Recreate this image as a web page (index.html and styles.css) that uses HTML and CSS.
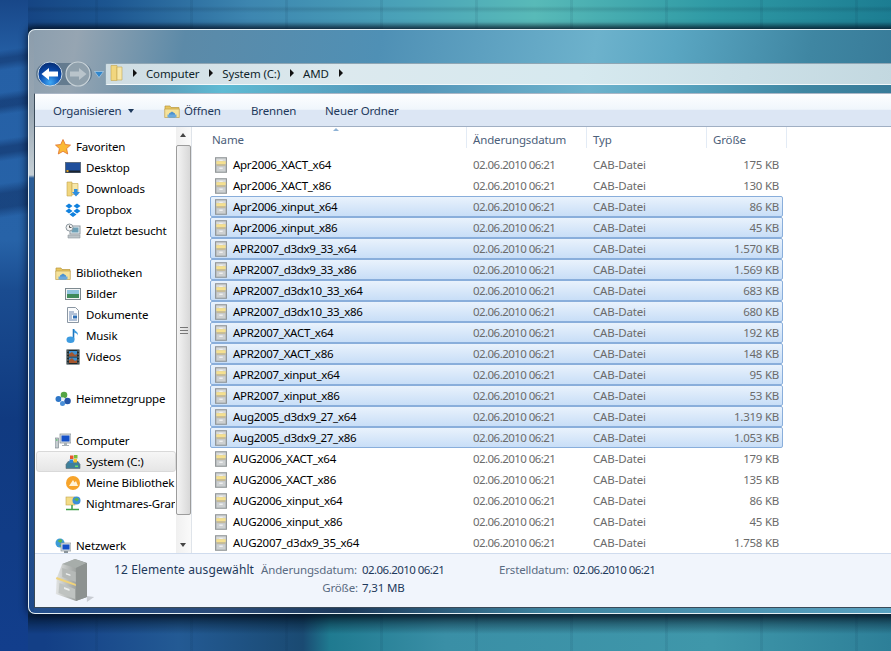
FILE: index.html
```html
<!DOCTYPE html>
<html lang="de">
<head>
<meta charset="utf-8">
<title>AMD</title>
<link rel="stylesheet" href="styles.css">
</head>
<body>
<svg class="defs" width="0" height="0" aria-hidden="true">
  <symbol id="cab" viewBox="0 0 14 18">
    <rect x="0.5" y="0.5" width="13" height="17" fill="#b4b8ba" stroke="#8a8f91"/>
    <rect x="1.5" y="1.5" width="11" height="3" fill="#d8dada"/>
    <path d="M1.5 4.5h11v3.500h-11z" fill="#f5e090"/>
    <rect x="2" y="8.500" width="10" height="1" fill="#dcc070"/>
    <rect x="5" y="3" width="4" height="1" fill="#f6f6f6"/>
    <rect x="2" y="10.500" width="10" height="6" fill="#cdd0d1"/>
    <rect x="5" y="12" width="4" height="1.500" fill="#f4f4f4"/>
  </symbol>
  <symbol id="folder" viewBox="0 0 16 16">
    <path d="M1 3h5l1 1.500h8v2H1z" fill="#e8c65f" stroke="#b8963c" stroke-width=".7"/>
    <path d="M.7 6h14.600v8.500H.7z" fill="#f5e29a" stroke="#c0a050" stroke-width=".7"/>
    <path d="M5 14.500v-4l3-2 3 2v4z" fill="#4d92d0"/>
    <path d="M3.500 11.500h9v3h-9z" fill="#6aa9de"/>
  </symbol>
</svg>
<div class="window">
  <div class="chrome">
    <div class="nav-buttons">
      <span class="pill">
      <svg class="round" width="28" height="28" viewBox="0 0 28 28">
        <defs><radialGradient id="bk" cx=".5" cy=".85" r=".8"><stop offset="0" stop-color="#3fa9f5"/><stop offset=".55" stop-color="#0b4fb4"/><stop offset="1" stop-color="#062f78"/></radialGradient></defs>
        <circle cx="14" cy="14" r="12" fill="url(#bk)" stroke="#c6d6e4" stroke-width="1"/>
        <path d="M5.500 14 13 8v3.500h9v5h-9V20z" fill="#fff"/>
      </svg>
      <svg class="round" width="28" height="28" viewBox="0 0 28 28">
        <circle cx="14" cy="14" r="12" fill="#8fa0ac" stroke="#c8d2d8" stroke-width="1.200"/>
        <path d="M22.500 14 15 8v3.500H6v5h9V20z" fill="#b9c4cb"/>
      </svg>
      </span>
      <svg class="drop" width="10" height="7" viewBox="0 0 10 7"><path d="M.5.500h9L5 6.500z" fill="#2f86cc" stroke="#cfe4f4" stroke-width=".5"/></svg>
    </div>
    <div class="address">
      <svg class="addr-folder" width="14" height="18" viewBox="0 0 14 18"><path d="M1 1.500h6v15H1z" fill="#f1d67e" stroke="#c4a54e" stroke-width=".6"/><path d="M7 3h5v13H7z" fill="#f7e7a8" stroke="#c4a54e" stroke-width=".6"/></svg>
      <span class="crumb-arrow"></span><span class="crumb">Computer</span>
      <span class="crumb-arrow"></span><span class="crumb">System (C:)</span>
      <span class="crumb-arrow"></span><span class="crumb">AMD</span>
      <span class="crumb-arrow"></span>
    </div>
  </div>
  <div class="frame">
    <div class="toolbar">
      <span class="tool tool-org">Organisieren<span class="tool-caret"></span></span>
      <span class="tool tool-open"><svg width="16" height="16"><use href="#folder"/></svg>Öffnen</span>
      <span class="tool tool-burn">Brennen</span>
      <span class="tool">Neuer Ordner</span>
    </div>
    <div class="main">
      <nav class="nav">
        <div class="nav-item group"><svg width="16" height="16" viewBox="0 0 16 16"><path d="M8 .5l2.300 5 5.200.6-3.900 3.500 1.100 5.400L8 12.300 3.300 15l1.100-5.400L.5 6.100l5.200-.6z" fill="#fbb935" stroke="#e0702c" stroke-width=".8"/></svg>Favoriten</div>
        <div class="nav-item sub"><svg width="16" height="16" viewBox="0 0 16 16"><rect x=".5" y="2.500" width="15" height="10" fill="#1f4f9c" stroke="#5b6b80"/><rect x="1" y="10.500" width="14" height="2" fill="#1b2430"/><rect x="1.500" y="10" width="2" height="2" fill="#e0a020"/></svg>Desktop</div>
        <div class="nav-item sub"><svg width="16" height="16" viewBox="0 0 16 16"><path d="M2 1h5v14H2z" fill="#f1d67e" stroke="#c4a54e" stroke-width=".6"/><path d="M7 2.500h6v11H7z" fill="#f7e7a8" stroke="#c4a54e" stroke-width=".6"/><path d="M9 8h3.500v3H15l-4 4.500L7 11h2z" fill="#2f8fe0"/></svg>Downloads</div>
        <div class="nav-item sub"><svg width="16" height="16" viewBox="0 0 16 16"><path d="M4 1.500L.5 4 4 6.500 7.500 4zM12 1.500L8.500 4 12 6.500 15.500 4zM4 6.500L.5 9 4 11.500 7.500 9zM12 6.500L8.500 9 12 11.500 15.500 9zM8 10l-3.500 2.500L8 15l3.500-2.500z" fill="#1081de"/></svg>Dropbox</div>
        <div class="nav-item sub"><svg width="16" height="16" viewBox="0 0 16 16"><rect x="5" y="3" width="10" height="8" fill="#e8eef2" stroke="#8d989f"/><rect x="6.500" y="4.500" width="7" height="5" fill="#6d9fb5"/><circle cx="4.500" cy="4.500" r="3.500" fill="#f2f2f2" stroke="#8d989f"/><path d="M4.500 2.500v2h2" fill="none" stroke="#555"/><path d="M3 12h12v3H3z" fill="#bcc4c8" stroke="#8d989f" stroke-width=".6"/></svg>Zuletzt besucht</div>
        <div class="nav-gap"></div>
        <div class="nav-item group"><svg width="16" height="16"><use href="#folder"/></svg>Bibliotheken</div>
        <div class="nav-item sub"><svg width="16" height="16" viewBox="0 0 16 16"><rect x=".5" y="2.500" width="15" height="11" fill="#f3f4f4" stroke="#7d8a90"/><rect x="2" y="4" width="12" height="4" fill="#8fc3dd"/><rect x="2" y="8" width="12" height="4" fill="#3f8a5a"/></svg>Bilder</div>
        <div class="nav-item sub"><svg width="16" height="16" viewBox="0 0 16 16"><path d="M2.500.5h8l3 3v12h-11z" fill="#fbfcfd" stroke="#8b97a3"/><path d="M4 5h5M4 7h8M4 9h3M4 11h3M4 13h8" stroke="#6a86b0"/><rect x="8" y="8.500" width="4" height="3" fill="#2f6fb5"/></svg>Dokumente</div>
        <div class="nav-item sub"><svg width="16" height="16" viewBox="0 0 16 16"><path d="M8.500 1v10.500" stroke="#1f77c0" stroke-width="1.600"/><ellipse cx="5.500" cy="11.800" rx="4" ry="3.200" fill="#3d9be0"/><path d="M9 1c1 2.500 4.500 2.500 4 6.500C12.500 5.500 10.500 5 9 4.500z" fill="#3d9be0"/></svg>Musik</div>
        <div class="nav-item sub"><svg width="16" height="16" viewBox="0 0 16 16"><rect x="1.500" y=".5" width="13" height="15" fill="#1c2a2e"/><rect x="4" y="2" width="8" height="5.500" fill="#3d8fd0"/><rect x="4" y="8.500" width="8" height="5.500" fill="#3d8fd0"/><path d="M4 5l3-2 3 3 2-1v2.500H4zM4 11l3-2 3 3 2-1v3H4z" fill="#a5562e"/><path d="M2.500 2h.8M2.500 5h.8M2.500 8h.8M2.500 11h.8M2.500 14h.8M12.700 2h.8M12.700 5h.8M12.700 8h.8M12.700 11h.8M12.700 14h.8" stroke="#dfe8ea"/></svg>Videos</div>
        <div class="nav-gap"></div>
        <div class="nav-item group"><svg width="16" height="16" viewBox="0 0 16 16"><circle cx="3.500" cy="8" r="3" fill="#2f77c8"/><circle cx="9" cy="4" r="3.300" fill="#55a544"/><circle cx="12.500" cy="10" r="3.300" fill="#2456a8"/><circle cx="7.500" cy="12.500" r="2.500" fill="#4a8fd8"/><circle cx="8" cy="8" r="1.800" fill="#e8f0f8"/></svg>Heimnetzgruppe</div>
        <div class="nav-gap"></div>
        <div class="nav-item group"><svg width="16" height="16" viewBox="0 0 16 16"><rect x="5" y="1" width="11" height="9" fill="#d9dee2" stroke="#7f8a92" stroke-width=".7"/><rect x="6.500" y="2.500" width="8" height="6" fill="#1450c8"/><path d="M9 10h3v2h2v1H7v-1h2z" fill="#a7b0b6"/><rect x="0" y="5" width="3.500" height="10" fill="#c5ccd0" stroke="#6f7a82" stroke-width=".6"/><rect x="1" y="6.500" width="1.500" height="1" fill="#30c040"/></svg>Computer</div>
        <div class="nav-item sub selected"><svg width="16" height="16" viewBox="0 0 16 16"><path d="M1 10.500l2-3h10l2 3v4H1z" fill="#3f7f99" stroke="#5d6b72" stroke-width=".6"/><rect x="10" y="11.500" width="3" height="1.500" fill="#6be06b"/><rect x="5" y="1.500" width="3.500" height="3.500" fill="#e8562a"/><rect x="9" y="1" width="3.500" height="3.500" fill="#7cbb3a"/><rect x="4.500" y="5.500" width="3.500" height="3.500" fill="#2f86d8"/><rect x="8.500" y="5" width="3.500" height="3.500" fill="#f4c22c"/></svg>System (C:)</div>
        <div class="nav-item sub"><svg width="16" height="16" viewBox="0 0 16 16"><circle cx="8" cy="8" r="7" fill="#f7a42b"/><path d="M4 11l4-6 1.500 2.500L11 6l2 5z" fill="#fff3d8"/></svg>Meine Bibliothek</div>
        <div class="nav-item sub"><svg width="16" height="16" viewBox="0 0 16 16"><rect x="1" y="1" width="9" height="8" fill="#f3dc86" stroke="#c4a54e" stroke-width=".6"/><circle cx="11.500" cy="4.500" r="4" fill="#3d8fd8"/><path d="M9 3.500l3-2 2 2-2 2z" fill="#5fb548"/><path d="M7 9v4M1 13.500h13" stroke="#3fa048" stroke-width="1.500"/></svg>Nightmares-Gran</div>
        <div class="nav-gap"></div>
        <div class="nav-item group"><svg width="16" height="16" viewBox="0 0 16 16"><circle cx="5" cy="5" r="4.500" fill="#3d9bd8"/><path d="M2.500 3l3-2 2 2-2 2zM4 7l3 0-1 2z" fill="#5fb548"/><rect x="6" y="5" width="10" height="8" fill="#d9dee2" stroke="#7f8a92" stroke-width=".6"/><rect x="7.500" y="6.500" width="7" height="5" fill="#1450c8"/><rect x="9" y="13" width="4" height="2" fill="#8a949a"/></svg>Netzwerk</div>
      </nav>
      <div class="scrollbar">
        <span class="scroll-up"></span>
        <div class="thumb"><span class="grip"></span></div>
        <span class="scroll-down"></span>
      </div>
      <section class="list">
        <div class="header">
          <span class="sort-arrow"></span>
          <span class="col col-name">Name</span>
          <span class="col">Änderungsdatum</span>
          <span class="col">Typ</span>
          <span class="col">Größe</span>
        </div>
        <div class="rows">
          <div class="row"><svg width="12" height="16"><use href="#cab"/></svg><span class="name">Apr2006_XACT_x64</span><span class="date">02.06.2010 06:21</span><span>CAB-Datei</span><span class="size">175 KB</span></div>
          <div class="row"><svg width="12" height="16"><use href="#cab"/></svg><span class="name">Apr2006_XACT_x86</span><span class="date">02.06.2010 06:21</span><span>CAB-Datei</span><span class="size">130 KB</span></div>
          <div class="row on"><svg width="12" height="16"><use href="#cab"/></svg><span class="name">Apr2006_xinput_x64</span><span class="date">02.06.2010 06:21</span><span>CAB-Datei</span><span class="size">86 KB</span></div>
          <div class="row on"><svg width="12" height="16"><use href="#cab"/></svg><span class="name">Apr2006_xinput_x86</span><span class="date">02.06.2010 06:21</span><span>CAB-Datei</span><span class="size">45 KB</span></div>
          <div class="row on"><svg width="12" height="16"><use href="#cab"/></svg><span class="name">APR2007_d3dx9_33_x64</span><span class="date">02.06.2010 06:21</span><span>CAB-Datei</span><span class="size">1.570 KB</span></div>
          <div class="row on"><svg width="12" height="16"><use href="#cab"/></svg><span class="name">APR2007_d3dx9_33_x86</span><span class="date">02.06.2010 06:21</span><span>CAB-Datei</span><span class="size">1.569 KB</span></div>
          <div class="row on"><svg width="12" height="16"><use href="#cab"/></svg><span class="name">APR2007_d3dx10_33_x64</span><span class="date">02.06.2010 06:21</span><span>CAB-Datei</span><span class="size">683 KB</span></div>
          <div class="row on"><svg width="12" height="16"><use href="#cab"/></svg><span class="name">APR2007_d3dx10_33_x86</span><span class="date">02.06.2010 06:21</span><span>CAB-Datei</span><span class="size">680 KB</span></div>
          <div class="row on"><svg width="12" height="16"><use href="#cab"/></svg><span class="name">APR2007_XACT_x64</span><span class="date">02.06.2010 06:21</span><span>CAB-Datei</span><span class="size">192 KB</span></div>
          <div class="row on"><svg width="12" height="16"><use href="#cab"/></svg><span class="name">APR2007_XACT_x86</span><span class="date">02.06.2010 06:21</span><span>CAB-Datei</span><span class="size">148 KB</span></div>
          <div class="row on"><svg width="12" height="16"><use href="#cab"/></svg><span class="name">APR2007_xinput_x64</span><span class="date">02.06.2010 06:21</span><span>CAB-Datei</span><span class="size">95 KB</span></div>
          <div class="row on"><svg width="12" height="16"><use href="#cab"/></svg><span class="name">APR2007_xinput_x86</span><span class="date">02.06.2010 06:21</span><span>CAB-Datei</span><span class="size">53 KB</span></div>
          <div class="row on"><svg width="12" height="16"><use href="#cab"/></svg><span class="name">Aug2005_d3dx9_27_x64</span><span class="date">02.06.2010 06:21</span><span>CAB-Datei</span><span class="size">1.319 KB</span></div>
          <div class="row on"><svg width="12" height="16"><use href="#cab"/></svg><span class="name">Aug2005_d3dx9_27_x86</span><span class="date">02.06.2010 06:21</span><span>CAB-Datei</span><span class="size">1.053 KB</span></div>
          <div class="row"><svg width="12" height="16"><use href="#cab"/></svg><span class="name">AUG2006_XACT_x64</span><span class="date">02.06.2010 06:21</span><span>CAB-Datei</span><span class="size">179 KB</span></div>
          <div class="row"><svg width="12" height="16"><use href="#cab"/></svg><span class="name">AUG2006_XACT_x86</span><span class="date">02.06.2010 06:21</span><span>CAB-Datei</span><span class="size">135 KB</span></div>
          <div class="row"><svg width="12" height="16"><use href="#cab"/></svg><span class="name">AUG2006_xinput_x64</span><span class="date">02.06.2010 06:21</span><span>CAB-Datei</span><span class="size">86 KB</span></div>
          <div class="row"><svg width="12" height="16"><use href="#cab"/></svg><span class="name">AUG2006_xinput_x86</span><span class="date">02.06.2010 06:21</span><span>CAB-Datei</span><span class="size">45 KB</span></div>
          <div class="row"><svg width="12" height="16"><use href="#cab"/></svg><span class="name">AUG2007_d3dx9_35_x64</span><span class="date">02.06.2010 06:21</span><span>CAB-Datei</span><span class="size">1.758 KB</span></div>
        </div>
      </section>
    </div>
    <footer class="details">
      <svg class="big-cab" width="42" height="46" viewBox="0 0 46 46" preserveAspectRatio="none">
        <defs><linearGradient id="cg" x1="0" x2="1"><stop offset="0" stop-color="#e2e4e3"/><stop offset=".55" stop-color="#a8acaa"/><stop offset="1" stop-color="#7f8482"/></linearGradient></defs>
        <path d="M36 38l8 1-8 5z" fill="#c8ccd2"/>
        <path d="M9 6l14-5 13 4 0 34-12 4L2 36 3 20z" fill="url(#cg)"/>
        <path d="M9 6l14-5 13 4-12 5z" fill="#a7adaa"/>
        <path d="M3 19l21 7v2L2 21z" fill="#efd27a"/>
        <path d="M9 10l15 4v10l-15-5z" fill="#b5b9b7"/>
        <path d="M6 25l17 6v10L5 35z" fill="#bfc3c1"/>
        <path d="M13 15l5 1.500v1.500l-5-1.500zM11 29l6 2v2l-6-2z" fill="#eceeed"/>
        <path d="M24 10l12-5v34l-12 4z" fill="#8d9290"/>
      </svg>
      <div class="summary">12 Elemente ausgewählt</div>
      <dl class="props">
        <dt>Änderungsdatum:</dt><dd class="date">02.06.2010 06:21</dd>
        <dt>Erstelldatum:</dt><dd class="date">02.06.2010 06:21</dd>
        <dt class="k-size">Größe:</dt><dd class="v-size">7,31 MB</dd>
      </dl>
    </footer>
  </div>
</div>
</body>
</html>
```
FILE: styles.css
```css
* { box-sizing: border-box; }
html, body { height: 100%; }
body {
  margin: 0;
  overflow: hidden;
  padding: 29px 0 0 28px;
  font: 11.5px/21px "Noto Sans", "Open Sans", sans-serif;
  letter-spacing: -.15px;
  color: #000;
  background:
    linear-gradient(172deg, rgba(12,40,90,0) 0, rgba(12,40,90,0) 50px, rgba(12,40,90,.45) 58px, rgba(12,40,90,.45) 62px, rgba(12,40,90,0) 70px, rgba(12,40,90,0) 92px, rgba(12,40,90,.5) 100px, rgba(12,40,90,.5) 106px, rgba(12,40,90,0) 114px, rgba(12,40,90,0) 138px, rgba(12,40,90,.5) 146px, rgba(12,40,90,.5) 152px, rgba(12,40,90,0) 160px, rgba(12,40,90,0) 182px, rgba(12,40,90,.5) 192px, rgba(12,40,90,.5) 206px, rgba(12,40,90,0) 216px) left top / 28px 100% no-repeat,
    linear-gradient(180deg, #184788 0, #2560a6 60px, #2763a8 240px, #1a4c90 290px, #103a80 420px, #123e8c 100%) left top / 28px 100% no-repeat,
    repeating-linear-gradient(90deg, rgba(0,30,60,.08) 0 3px, rgba(0,0,0,0) 3px 95px),
    linear-gradient(180deg, rgba(0,16,32,0) 0, rgba(0,16,32,0) 6px, rgba(0,16,32,.12) 9px, rgba(0,16,32,0) 13px, rgba(0,0,0,0) 22px, rgba(0,16,32,.5) 29px, rgba(0,16,32,.5) 612px, rgba(0,16,32,.65) 616px, rgba(0,0,0,0) 634px),
    linear-gradient(90deg, #133f86 0, #133f86 5%, #235a94 20%, #1a4a72 34%, #1f7a90 37%, #3a8fa6 50%, #3f97aa 80%, #2d7f98 100%) left bottom / 100% 37px no-repeat,
    linear-gradient(90deg, #133f7f 0, #1c5590 12%, #3d86b0 28%, #4aa2b8 45%, #58bab8 60%, #2f9aa5 80%, #1c7d92 100%) left top / 100% 29px no-repeat,
    #14508c;
}
.defs { position: absolute; }
.window {
  width: 880px;
  height: 585px;
  padding: 0 6px 5px 5px;
  display: flex;
  flex-direction: column;
  border: 1px solid #e4eef3;
  border-width: 1px 0 1px 1px;
  border-radius: 7px 0 0 7px;
  box-shadow: 0 0 8px rgba(0, 8, 24, .9);
  background:
    linear-gradient(180deg, #8c9dac 0, #98a6b2 80px, #c6d0d6 145px, #2c5e98 148px, #1f4a8a 100%) left top / 5px 100% no-repeat,
    linear-gradient(90deg, #24508e 0, #2a4a78 22%, #1d3a5c 36%, #3f86a2 60%, #5aa2c2 100%) left bottom / 100% 6px no-repeat,
    linear-gradient(90deg, rgba(95,192,216,0) 10%, rgba(95,192,216,.9) 22%, rgba(95,192,216,0) 45%, rgba(95,192,216,0) 100%) left 55px / 100% 8px no-repeat,
    linear-gradient(100deg, #8b9eae 0, #96a5b2 5%, #5c8aa8 16%, #4f90b5 36%, #6db2cc 58%, #5aa6c2 66%, #3f86a2 80%, #2f6e8e 100%);
}
.chrome {
  height: 63px;
  flex: none;
  padding: 33px 0 8px 2px;
  display: flex;
  align-items: flex-start;
}
.nav-buttons { display: flex; align-items: center; width: 69px; height: 24px; margin-top: -1px; flex: none; }
.pill {
  display: flex;
  align-items: center;
  flex: none;
  height: 22px;
  border-radius: 11px;
  background: rgba(60, 90, 115, .55);
}
.round { flex: none; }
.drop { margin-left: 2px; flex: none; }
.address {
  flex: 1;
  height: 22px;
  display: flex;
  align-items: center;
  padding: 0 0 2px 4px;
  margin-right: 6px;
  border: 1px solid #8fa6b4;
  border-bottom-color: #f2f8fa;
  border-radius: 2px;
  color: #0f1f2a;
  background: linear-gradient(90deg, #cfdde3 0, #dce9ee 30%, #d6e9ef 60%, #c3d8e0 100%);
}
.addr-folder { flex: none; margin-right: 9px; }
.crumb-arrow {
  width: 0; height: 0;
  border-left: 4px solid #111;
  border-top: 4px solid transparent;
  border-bottom: 4px solid transparent;
  margin-right: 9px;
}
.crumb { margin-right: 10px; white-space: nowrap; }
.frame {
  flex: 1;
  min-height: 0;
  display: flex;
  flex-direction: column;
  border: 1px solid #3a4a58;
  border-top-color: #aab6c6;
  background: #fff;
}
.toolbar {
  height: 33px;
  flex: none;
  display: flex;
  align-items: center;
  padding: 1px 0 0 18px;
  color: #1e395b;
  border-bottom: 1px solid #a0afc3;
  background: linear-gradient(180deg, #fdfeff 0, #f0f6fc 48%, #dce6f4 50%, #dce6f4 100%);
}
.tool { display: inline-flex; align-items: center; white-space: nowrap; }
.tool-org { width: 111px; }
.tool-caret {
  margin-left: 6px;
  border-top: 4px solid #1e395b;
  border-left: 3.500px solid transparent;
  border-right: 3.500px solid transparent;
}
.tool-open { width: 87px; gap: 4px; }
.tool-burn { width: 74px; }
.main { flex: 1; min-height: 0; display: flex; }
.nav { width: 141px; flex: none; padding: 9px 0 0 1px; overflow: hidden; }
.nav-item {
  height: 21px;
  display: flex;
  align-items: center;
  gap: 5px;
  border: 1px solid transparent;
  white-space: nowrap;
  overflow: hidden;
  line-height: 14px;
}
.nav-item svg { flex: none; }
.group { padding-left: 18px; }
.sub { padding-left: 28px; }
.selected {
  border-color: #d9d9d9;
  border-radius: 3px;
  background: linear-gradient(180deg, #f6f6f6 0, #e6e6e6 100%);
}
.nav-gap { height: 21px; }
.scrollbar {
  width: 16px;
  flex: none;
  position: relative;
  padding-top: 18px;
  border-right: 1px solid #dfe4ea;
  background: linear-gradient(90deg, #f0f0f0, #fafafa);
}
.scroll-up, .scroll-down {
  position: absolute;
  left: 4px;
  border-left: 3.500px solid transparent;
  border-right: 3.500px solid transparent;
}
.scroll-up { top: 6px; border-bottom: 4px solid #444; }
.scroll-down { bottom: 6px; border-top: 4px solid #444; }
.thumb {
  height: 370px;
  border: 1px solid #9c9c9c;
  border-radius: 2px;
  display: flex;
  align-items: center;
  justify-content: center;
  background: linear-gradient(90deg, #f4f4f4, #d8d8d8);
}
.grip { width: 8px; height: 7px; border-top: 1px solid #777; border-bottom: 1px solid #777; background: linear-gradient(180deg, transparent 2px, #777 2px 3px, transparent 3px); }
.list { flex: 1; min-width: 0; padding: 0 0 0 18px; overflow: hidden; }
.header {
  height: 27px;
  position: relative;
  display: grid;
  grid-template-columns: 275px 120px 120px 80px;
  margin-left: -18px;
  color: #4c607a;
}
.col {
  display: block;
  height: 21px;
  padding: 2px 0 0 6px;
  line-height: 21px;
  border-right: 1px solid #e3ebf5;
  white-space: nowrap;
}
.col-name { padding-left: 20px; }
.sort-arrow {
  position: absolute;
  left: 141px;
  top: 1px;
  border-bottom: 3px solid #8fb3d6;
  border-left: 3px solid transparent;
  border-right: 3px solid transparent;
}
.row {
  width: 573px;
  height: 21px;
  display: grid;
  grid-template-columns: 18px 240px 120px 120px 66px;
  align-items: center;
  padding: 0 3px 0 4px;
  border: 1px solid transparent;
  border-radius: 2px;
  color: #6b6b6b;
  white-space: nowrap;
  line-height: 19px;
}
.row svg { display: block; }
.name { color: #000; letter-spacing: -.28px; }
.date { letter-spacing: -.55px; }
.size { text-align: right; letter-spacing: -.25px; }
.on {
  border-color: #89aedb;
  background: linear-gradient(180deg, #e9f2fc 0, #c8def7 100%);
}
.details {
  flex: none;
  height: 54px;
  display: flex;
  color: #5a6b82;
  border-top: 1px solid #d0dcee;
  background: #f1f5fc;
}
.big-cab { flex: none; margin: 4px 0 0 19px; }
.summary { margin: 7px 0 0 18px; width: 147px; flex: none; line-height: 18px; font-size: 12px; letter-spacing: .1px; color: #1e395b; white-space: nowrap; }
.props {
  margin: 7px 0 0;
  display: grid;
  grid-template-columns: 101px 137px 74px 120px;
  grid-template-rows: 18px 18px;
  line-height: 18px;
  white-space: nowrap;
}
.props dd { margin: 0; color: #1e395b; }
.k-size { grid-row: 2; text-align: right; padding-right: 4px; }
.v-size { grid-row: 2; }
```
